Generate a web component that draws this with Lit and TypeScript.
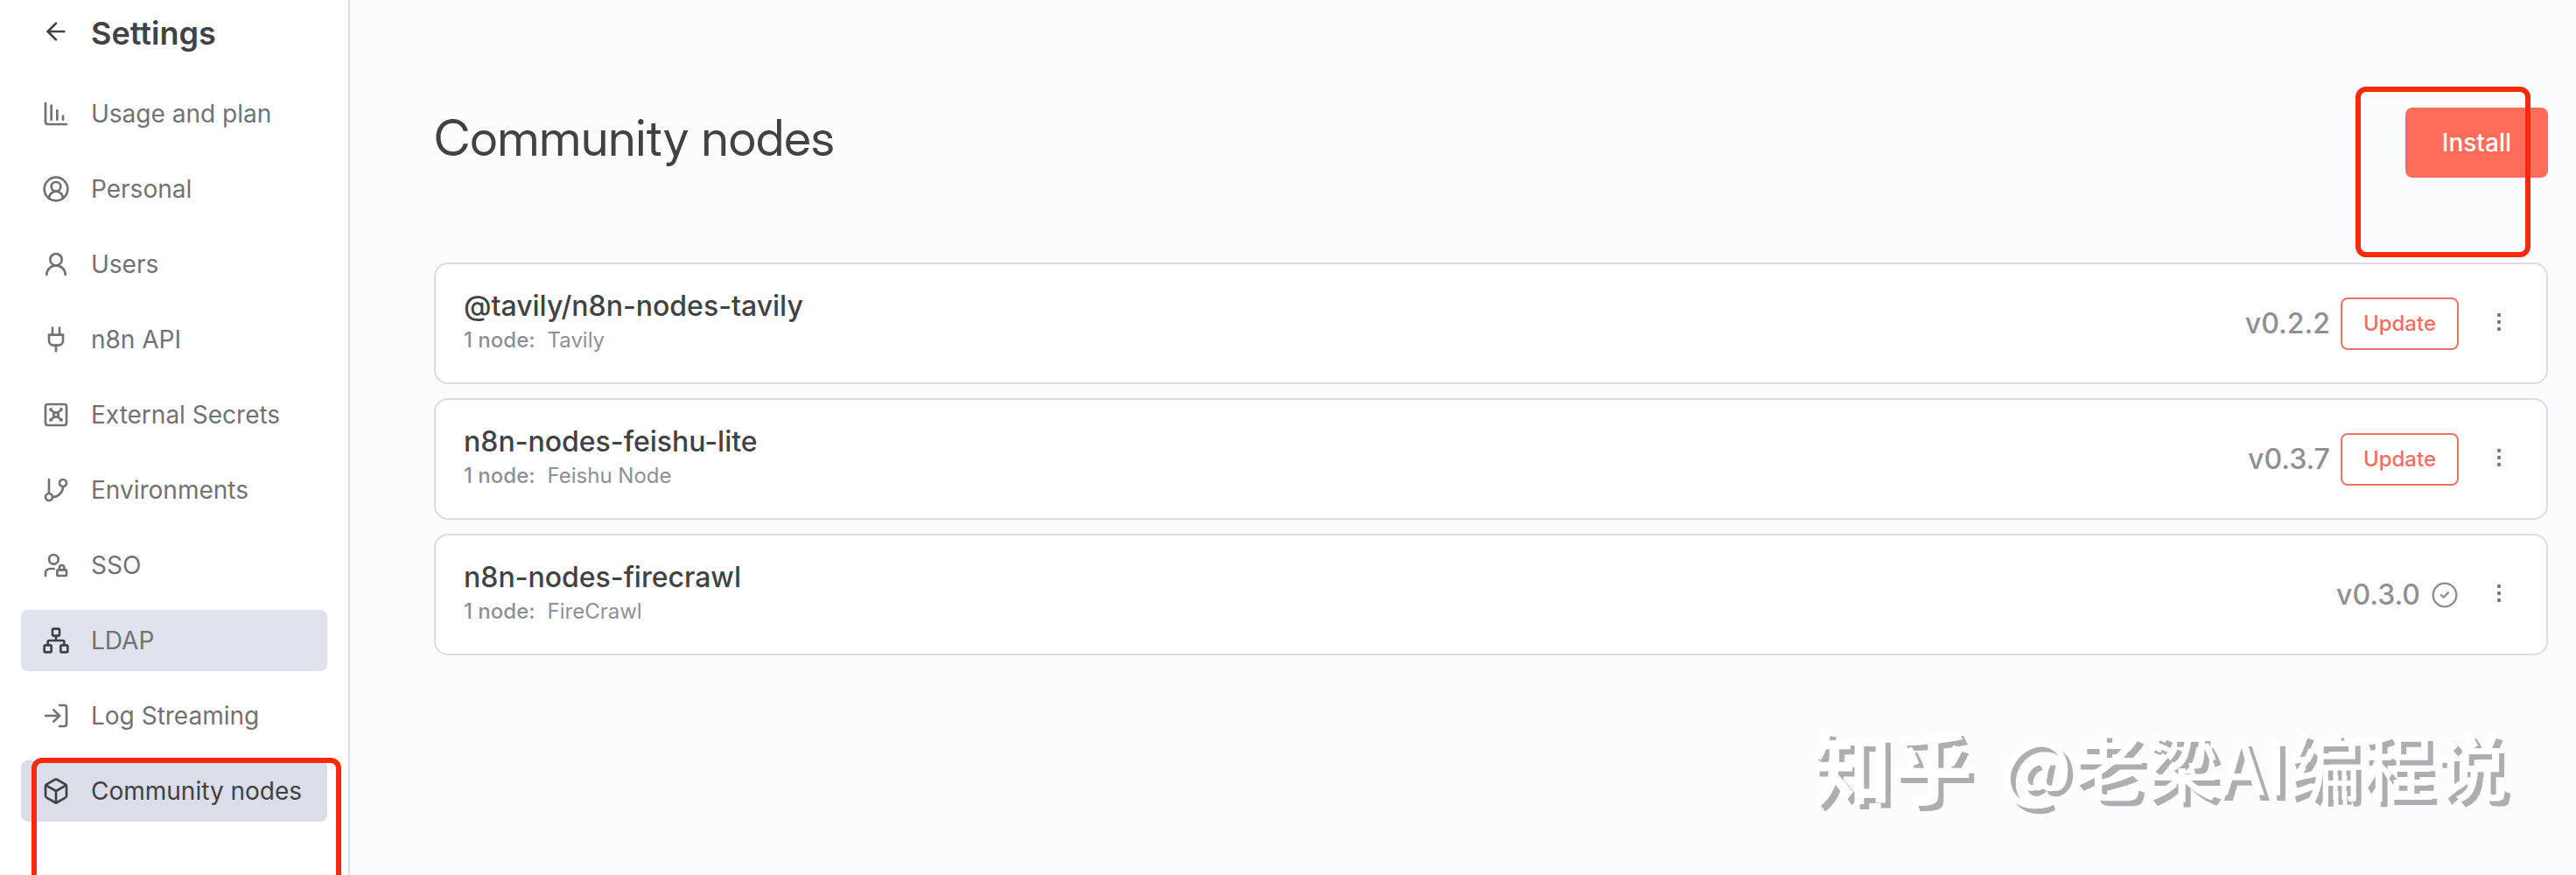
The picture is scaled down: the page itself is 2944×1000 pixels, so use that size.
import { LitElement, html, css, svg } from "lit";
import { customElement } from "lit/decorators.js";
import { classMap } from "lit/directives/class-map.js";

const ICONS: Record<string, unknown> = {
  back: svg`<path d="m12 19-7-7 7-7"/><path d="M19 12H5"/>`,
  usage: svg`<path d="M3 3v16a2 2 0 0 0 2 2h16"/><path d="M8 5v12"/><path d="M13 9v8"/><path d="M18 14v3"/>`,
  personal: svg`<path d="M18 20a6 6 0 0 0-12 0"/><circle cx="12" cy="10" r="4"/><circle cx="12" cy="12" r="10"/>`,
  users: svg`<circle cx="12" cy="8" r="5"/><path d="M20 21a8 8 0 0 0-16 0"/>`,
  api: svg`<path d="M12 22v-5"/><path d="M9 8V2"/><path d="M15 8V2"/><path d="M18 8v5a4 4 0 0 1-4 4h-4a4 4 0 0 1-4-4V8Z"/>`,
  secrets: svg`<rect width="18" height="18" x="3" y="3" rx="2"/><circle cx="7.5" cy="7.5" r=".5"/><path d="m7.9 7.9 2.7 2.7"/><circle cx="16.5" cy="7.5" r=".5"/><path d="m13.4 10.6 2.7-2.7"/><circle cx="7.5" cy="16.5" r=".5"/><path d="m7.9 16.1 2.7-2.7"/><circle cx="16.5" cy="16.5" r=".5"/><path d="m13.4 13.4 2.7 2.7"/><circle cx="12" cy="12" r="2"/>`,
  environments: svg`<path d="M6 3v12"/><circle cx="18" cy="6" r="3"/><circle cx="6" cy="18" r="3"/><path d="M18 9a9 9 0 0 1-9 9"/>`,
  sso: svg`<circle cx="10" cy="7" r="4"/><path d="M10.3 15H7a4 4 0 0 0-4 4v2"/><path d="M15 15.500V14a2 2 0 0 1 4 0v1.500"/><rect width="8" height="5" x="13" y="16" rx=".9"/>`,
  ldap: svg`<rect x="16" y="16" width="6" height="6" rx="1"/><rect x="2" y="16" width="6" height="6" rx="1"/><rect x="9" y="2" width="6" height="6" rx="1"/><path d="M5 16v-3a1 1 0 0 1 1-1h12a1 1 0 0 1 1 1v3"/><path d="M12 12V8"/>`,
  log: svg`<path d="m10 17 5-5-5-5"/><path d="M15 12H3"/><path d="M15 3h4a2 2 0 0 1 2 2v14a2 2 0 0 1-2 2h-4"/>`,
  box: svg`<path d="M21 8a2 2 0 0 0-1-1.730l-7-4a2 2 0 0 0-2 0l-7 4A2 2 0 0 0 3 8v8a2 2 0 0 0 1 1.730l7 4a2 2 0 0 0 2 0l7-4A2 2 0 0 0 21 16Z"/><path d="m3.300 7 8.700 5 8.700-5"/><path d="M12 22V12"/>`,
  check: svg`<circle cx="12" cy="12" r="10"/><path d="m9 12 2 2 4-4"/>`,
  dots: svg`<g fill="currentColor"><circle cx="12" cy="12" r="1"/><circle cx="12" cy="6" r="1"/><circle cx="12" cy="18" r="1"/></g>`,
};

const icon = (name: string) => html`<svg
  class="icon icon-${name}"
  viewBox="0 0 24 24"
  fill="none"
  stroke="currentColor"
  stroke-linecap="round"
  stroke-linejoin="round"
  aria-hidden="true"
>${ICONS[name]}</svg>`;

interface NavItem {
  icon: string;
  label: string;
  state?: "hovered" | "active";
}

const NAV: NavItem[] = [
  { icon: "usage", label: "Usage and plan" },
  { icon: "personal", label: "Personal" },
  { icon: "users", label: "Users" },
  { icon: "api", label: "n8n API" },
  { icon: "secrets", label: "External Secrets" },
  { icon: "environments", label: "Environments" },
  { icon: "sso", label: "SSO" },
  { icon: "ldap", label: "LDAP", state: "hovered" },
  { icon: "log", label: "Log Streaming" },
  { icon: "box", label: "Community nodes", state: "active" },
];

interface Pkg {
  name: string;
  nodes: string;
  version: string;
  update: boolean;
}

const PACKAGES: Pkg[] = [
  { name: "@tavily/n8n-nodes-tavily", nodes: "Tavily", version: "v0.2.2", update: true },
  { name: "n8n-nodes-feishu-lite", nodes: "Feishu Node", version: "v0.3.7", update: true },
  { name: "n8n-nodes-firecrawl", nodes: "FireCrawl", version: "v0.3.0", update: false },
];

@customElement("app-root")
export class AppRoot extends LitElement {
  static styles = css`
    :host {
      display: flex;
      position: relative;
      height: 100vh;
      overflow: hidden;
      background: #fbfcfe;
      color: #414244;
      font-family: Inter, "Liberation Sans", sans-serif;
      font-size: 28px;
      line-height: 36px;
    }
    * { box-sizing: border-box; }
    h1, h2, p, ul { margin: 0; padding: 0; }
    ul { list-style: none; }
    button { font: inherit; cursor: pointer; }
    .icon { width: 32px; height: 32px; stroke-width: 2; flex: none; display: block; }
    .icon-dots { stroke-width: 1.3; }
    .icon-check { stroke-width: 1.8; }

    .sidebar {
      flex: none;
      width: 400px;
      padding: 16px 24px 0;
      background: #fff;
      border-right: 2px solid #dbdde6;
    }
    .heading { display: flex; align-items: center; gap: 24px; padding-left: 24px; height: 44px; }
    .back { display: block; border: 0; padding: 0; margin-bottom: 5px; background: none; color: #414244; }
    .heading h2 { font-size: 36px; font-weight: 600; }
    .nav { display: flex; flex-direction: column; gap: 16px; margin-top: 35px; }
    .item { position: relative; }
    .link {
      display: flex;
      align-items: center;
      gap: 24px;
      width: 350px;
      height: 70px;
      padding: 0 24px;
      border-radius: 8px;
      color: #717274;
      text-decoration: none;
      white-space: nowrap;
    }
    .hovered { background: #e0e3ed; }
    .hovered .icon { color: #414244; }
    .active { background: #dbdde8; color: #414244; }

    .main { flex: 1; min-width: 0; padding: 120px 32px 0 96px; }
    .top { display: flex; justify-content: space-between; height: 180px; }
    .top h1 {
      font-family: "Inter Display", Inter, "Liberation Sans", sans-serif;
      font-size: 57px;
      line-height: 76px;
      font-weight: 400;
    }
    .install-wrap { position: relative; height: 80px; margin-top: 3px; }
    .install {
      height: 80px;
      padding: 0 42px;
      border: 0;
      border-radius: 8px;
      background: #ff6d5a;
      color: #fff;
      font-weight: 500;
    }

    .cards { display: flex; flex-direction: column; gap: 16px; }
    .card {
      display: flex;
      align-items: center;
      justify-content: space-between;
      height: 139px;
      padding: 0 38px 0 32px;
      background: #fff;
      border: 2px solid #dbdde2;
      border-radius: 16px;
    }
    .name, .version { font-size: 32px; line-height: 40px; font-weight: 500; }
    .info { padding-bottom: 2px; }
    .nodes { display: flex; gap: 14px; font-size: 24px; line-height: 38px; color: #8f9093; }
    .count { font-weight: 500; }
    .actions { display: flex; align-items: center; gap: 12px; color: #8f9093; }
    .update {
      height: 60px;
      padding: 0 24px;
      border: 2px solid #e8736a;
      border-radius: 8px;
      background: #fff;
      color: #ee6f62;
      font-size: 24px;
      font-weight: 500;
    }
    .menu { display: block; border: 0; padding: 0; margin: 0 0 4px 18px; background: none; color: #77787c; }

    .mark { position: absolute; border: 6px solid #f92a0c; border-radius: 12px; pointer-events: none; }
    .mark-install { top: -24px; right: 20px; width: 200px; height: 195px; }
    .mark-nav { top: -3px; left: 12px; width: 354px; height: 200px; }
    .watermark {
      position: absolute;
      right: 78px;
      bottom: 77px;
      display: flex;
      gap: 32px;
      color: #fff;
      font-family: "Noto Sans CJK SC", sans-serif;
      font-size: 84px;
      font-weight: 500;
      line-height: 100px;
      text-shadow: 6px 6px 0 #adaeb0;
      white-space: nowrap;
      pointer-events: none;
    }
    .brand { font-size: 92px; font-weight: 700; }
  `;

  private renderItem(item: NavItem) {
    const active = item.state === "active";
    return html`<li class="item">
      <a
        href="#"
        class=${classMap({ link: true, hovered: item.state === "hovered", active })}
        aria-current=${active ? "page" : "false"}
      >${icon(item.icon)}<span>${item.label}</span></a>
      ${active ? html`<div class="mark mark-nav"></div>` : null}
    </li>`;
  }

  private renderCard(pkg: Pkg) {
    return html`<article class="card">
      <div class="info">
        <h2 class="name">${pkg.name}</h2>
        <p class="nodes"><span class="count">1 node:</span><span>${pkg.nodes}</span></p>
      </div>
      <div class="actions">
        <span class="version">${pkg.version}</span>
        ${pkg.update ? html`<button class="update">Update</button>` : icon("check")}
        <button class="menu" aria-label="Package actions">${icon("dots")}</button>
      </div>
    </article>`;
  }

  render() {
    return html`
      <aside class="sidebar">
        <div class="heading">
          <button class="back" aria-label="Back">${icon("back")}</button>
          <h2>Settings</h2>
        </div>
        <nav><ul class="nav">${NAV.map((item) => this.renderItem(item))}</ul></nav>
      </aside>
      <main class="main">
        <header class="top">
          <h1>Community nodes</h1>
          <div class="install-wrap">
            <button class="install">Install</button>
            <div class="mark mark-install"></div>
          </div>
        </header>
        <section class="cards">${PACKAGES.map((pkg) => this.renderCard(pkg))}</section>
      </main>
      <div class="watermark"><span class="brand">知乎</span><span>@老梁AI编程说</span></div>
    `;
  }
}
